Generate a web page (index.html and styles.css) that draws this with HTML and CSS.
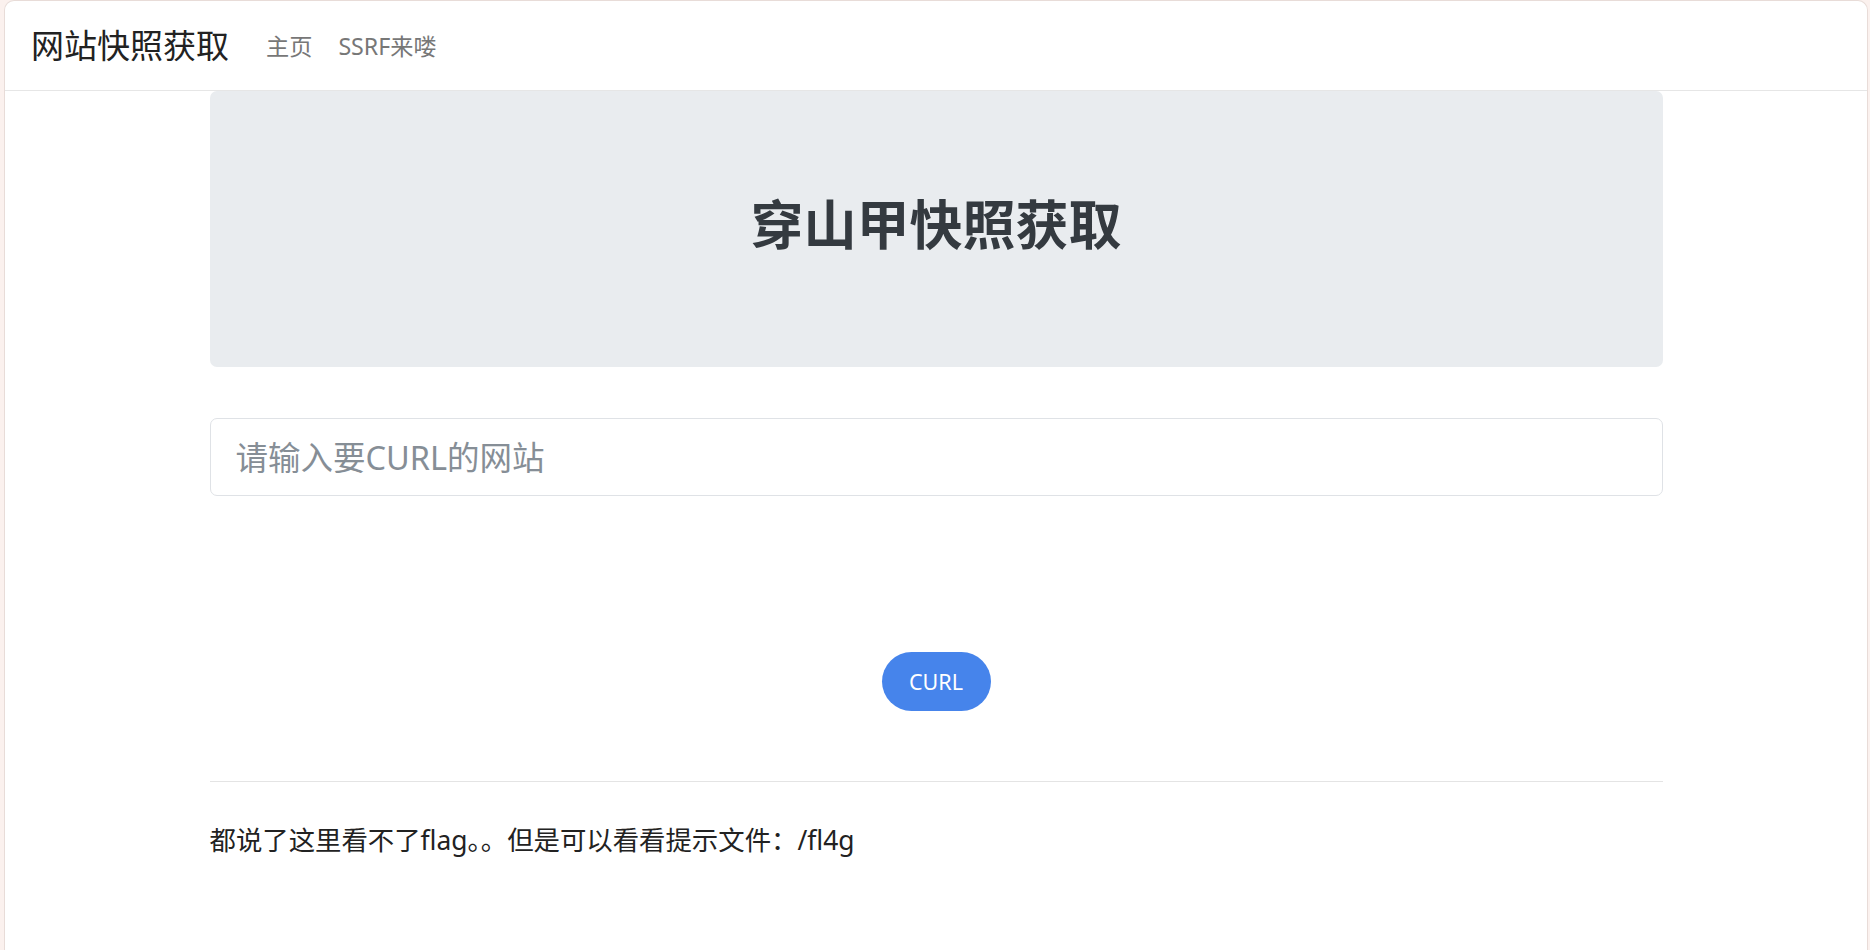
FILE: index.html
```html
<!DOCTYPE html>
<html lang="zh-CN">
<head>
<meta charset="utf-8">
<title>穿山甲快照获取</title>
<link rel="stylesheet" href="styles.css">
</head>
<body>
<div class="frame">
  <nav class="navbar">
    <a class="brand" href="#">网站快照获取</a>
    <ul class="nav-links">
      <li><a href="#">主页</a></li>
      <li><a href="#">SSRF来喽</a></li>
    </ul>
  </nav>
  <main class="container">
    <section class="jumbotron">
      <h1 class="title">穿山甲快照获取</h1>
    </section>
    <form class="curl-form">
      <input class="url-input" type="text" placeholder="请输入要CURL的网站">
      <div class="btn-row">
        <button class="btn-curl" type="button">CURL</button>
      </div>
    </form>
    <hr class="divider">
    <p class="hint">都说了这里看不了flag。。但是可以看看提示文件：/fl4g</p>
  </main>
</div>
</body>
</html>
```

FILE: styles.css
```css
html, body {
  margin: 0;
  padding: 0;
}
body {
  background: #fbf1ee;
  font-family: "Noto Sans", "Noto Sans CJK SC", sans-serif;
  color: #212529;
  height: 950px;
  overflow: hidden;
}
.frame {
  margin: 0 2px 0 4px;
  height: 950px;
  box-sizing: border-box;
  background: #ffffff;
  border: 1px solid #e8dcd8;
  border-bottom: none;
  border-radius: 10px 10px 0 0;
}
.navbar {
  height: 89px;
  border-bottom: 1px solid #e6e6e6;
  display: flex;
  align-items: center;
  padding-left: 26px;
}
.brand {
  font-size: 33px;
  line-height: 40px;
  color: #222;
  text-decoration: none;
  margin-right: 24px;
}
.nav-links {
  display: flex;
  list-style: none;
  margin: 0;
  padding: 0;
}
.nav-links a {
  display: block;
  padding: 0 13px;
  font-size: 23.2px;
  line-height: 34px;
  color: #777;
  text-decoration: none;
}
.container {
  width: 1453px;
  margin: 0 auto;
}
.jumbotron {
  height: 276px;
  box-sizing: border-box;
  background: #e9ecef;
  border-radius: 7px;
  display: flex;
  align-items: center;
  justify-content: center;
  padding-bottom: 8px;
}
.title {
  margin: 0;
  font-size: 53px;
  line-height: 64px;
  font-weight: 700;
  color: #343a40;
}
.curl-form {
  margin: 51px 0 0;
}
.url-input {
  display: block;
  width: 100%;
  height: 78px;
  box-sizing: border-box;
  border: 1px solid #dfe2e6;
  border-radius: 7px;
  padding: 0 25px;
  font-family: "Noto Sans", "Noto Sans CJK SC", sans-serif;
  font-size: 32.5px;
  color: #495057;
  background: #fff;
  outline: none;
}
.url-input::placeholder {
  color: #868e96;
}
.btn-row {
  display: flex;
  justify-content: center;
  margin-top: 156px;
}
.btn-curl {
  width: 109px;
  height: 59px;
  border: none;
  border-radius: 30px;
  background: #4684eb;
  color: #fff;
  font-family: "Noto Sans", "Noto Sans CJK SC", sans-serif;
  font-size: 21.5px;
  padding: 0;
  cursor: pointer;
}
.divider {
  margin: 70px 0 0;
  border: 0;
  border-top: 1px solid #e4e4e4;
  height: 0;
}
.hint {
  margin: 39px 0 0;
  font-size: 26.4px;
  line-height: 38px;
  color: #222;
}
```
